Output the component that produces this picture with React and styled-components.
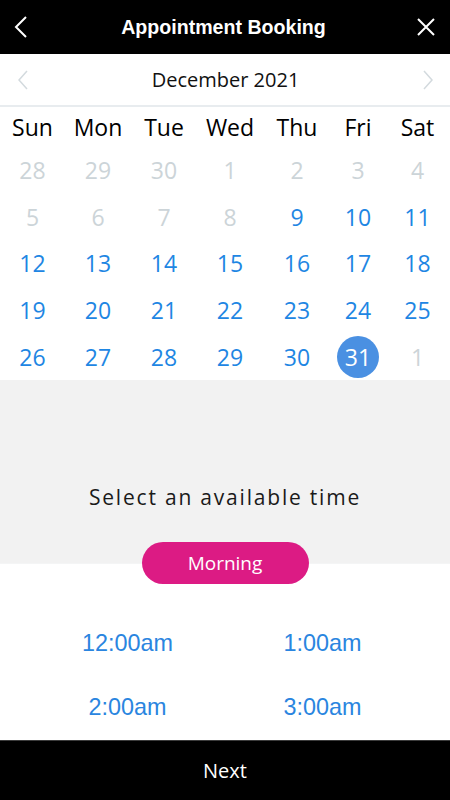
import React, { useState } from "react";
import styled, { createGlobalStyle } from "styled-components";

const GlobalStyle = createGlobalStyle`
  html, body {
    margin: 0;
    padding: 0;
    background: #ffffff;
  }
  * {
    box-sizing: border-box;
  }
`;

const weekdays = ["Sun", "Mon", "Tue", "Wed", "Thu", "Fri", "Sat"];

// previous/next month days are muted, days before the 9th are unavailable
const weeks = [
  [28, 29, 30, 1, 2, 3, 4],
  [5, 6, 7, 8, 9, 10, 11],
  [12, 13, 14, 15, 16, 17, 18],
  [19, 20, 21, 22, 23, 24, 25],
  [26, 27, 28, 29, 30, 31, 1],
];

const times = ["12:00am", "1:00am", "2:00am", "3:00am"];

export default function App() {
  const [selected, setSelected] = useState(31);

  return (
    <Page>
      <GlobalStyle />
      <Header>
        <IconButton aria-label="Back">
          <svg width="14" height="22" viewBox="0 0 14 22">
            <path d="M12 1 L2 11 L12 21" fill="none" stroke="#fff" strokeWidth="2" />
          </svg>
        </IconButton>
        <Title>Appointment Booking</Title>
        <IconButton aria-label="Close">
          <svg width="18" height="18" viewBox="0 0 18 18">
            <path d="M1 1 L17 17 M17 1 L1 17" fill="none" stroke="#fff" strokeWidth="2" />
          </svg>
        </IconButton>
      </Header>

      <MonthBar>
        <MonthArrow aria-label="Previous month">
          <svg width="10" height="20" viewBox="0 0 10 20">
            <path d="M9 1 L1 10 L9 19" fill="none" stroke="#d3dade" strokeWidth="1.5" />
          </svg>
        </MonthArrow>
        <MonthLabel>December 2021</MonthLabel>
        <MonthArrow aria-label="Next month">
          <svg width="10" height="20" viewBox="0 0 10 20">
            <path d="M1 1 L9 10 L1 19" fill="none" stroke="#d3dade" strokeWidth="1.5" />
          </svg>
        </MonthArrow>
      </MonthBar>

      <Calendar>
        <WeekRow>
          {weekdays.map((w) => (
            <Weekday key={w}>{w}</Weekday>
          ))}
        </WeekRow>
        {weeks.map((week, wi) => (
          <WeekRow key={wi} $tall>
            {week.map((d, di) => {
              const outside = (wi === 0 && d > 7) || (wi === 4 && d < 7);
              const muted = outside || (wi < 2 && d < 9);
              const isSel = !outside && d === selected;
              return (
                <DayCell key={di}>
                  <Day
                    $muted={muted}
                    $selected={isSel}
                    onClick={() => !muted && setSelected(d)}
                  >
                    {d}
                  </Day>
                </DayCell>
              );
            })}
          </WeekRow>
        ))}
      </Calendar>

      <Prompt>
        <PromptText>Select an available time</PromptText>
      </Prompt>
      <PillRow>
        <Pill>Morning</Pill>
      </PillRow>

      <Slots>
        {times.map((t) => (
          <Slot key={t}>{t}</Slot>
        ))}
      </Slots>

      <Footer>Next</Footer>
    </Page>
  );
}

const Page = styled.div`
  width: 450px;
  height: 800px;
  display: flex;
  flex-direction: column;
  background: #ffffff;
  font-family: "Open Sans", "Noto Sans", sans-serif;
  overflow: hidden;
`;

const Header = styled.header`
  height: 54px;
  flex-shrink: 0;
  background: #000000;
  display: flex;
  align-items: center;
  justify-content: space-between;
  padding: 0 14px 0 11px;
`;

const IconButton = styled.button`
  background: none;
  border: none;
  padding: 0;
  display: flex;
  align-items: center;
  justify-content: center;
  width: 20px;
  height: 24px;
  cursor: pointer;
`;

const Title = styled.h1`
  margin: 0;
  color: #ffffff;
  font-family: "Liberation Sans", Arial, sans-serif;
  font-weight: 700;
  font-size: 19.6px;
  letter-spacing: 0;
`;

const MonthBar = styled.div`
  height: 53px;
  flex-shrink: 0;
  display: flex;
  align-items: center;
  justify-content: space-between;
  padding: 0 17px 0 18px;
  border-bottom: 2px solid #e8ecef;
`;

const MonthArrow = styled.button`
  background: none;
  border: none;
  padding: 0;
  display: flex;
  cursor: pointer;
`;

const MonthLabel = styled.div`
  font-size: 20px;
  color: #111111;
`;

const Calendar = styled.div`
  flex-shrink: 0;
  display: flex;
  flex-direction: column;
`;

const WeekRow = styled.div`
  display: grid;
  grid-template-columns: 65px 66px 66px 66px 68px 54px 65px;
  height: ${(p) => (p.$tall ? "46.6px" : "40px")};
  align-items: center;
`;

const Weekday = styled.div`
  text-align: center;
  font-size: 23px;
  color: #000000;
`;

const DayCell = styled.div`
  display: flex;
  justify-content: center;
  align-items: center;
`;

const Day = styled.span`
  width: 42px;
  height: 42px;
  border-radius: 50%;
  display: flex;
  align-items: center;
  justify-content: center;
  font-size: 23px;
  color: ${(p) => (p.$selected ? "#ffffff" : p.$muted ? "#ccd4d8" : "#1e86e3")};
  background: ${(p) => (p.$selected ? "#4a90e2" : "transparent")};
  cursor: ${(p) => (p.$muted ? "default" : "pointer")};
`;

const Prompt = styled.div`
  height: 162px;
  flex-shrink: 0;
  background: #f2f2f2;
  display: flex;
  align-items: flex-end;
  justify-content: center;
  padding-bottom: 30px;
`;

const PromptText = styled.div`
  font-size: 21px;
  line-height: 30px;
  letter-spacing: 1.8px;
  color: #1a1a1a;
`;

const PillRow = styled.div`
  height: 42px;
  flex-shrink: 0;
  display: flex;
  justify-content: center;
  background: linear-gradient(#f2f2f2 0, #f2f2f2 21px, #e9ebec 21px, #ffffff 22px);
`;

const Pill = styled.button`
  width: 167px;
  height: 42px;
  border: none;
  border-radius: 21px;
  background: #dc1b84;
  color: #ffffff;
  font-family: "Open Sans", "Noto Sans", sans-serif;
  font-size: 19px;
  cursor: pointer;
`;

const Slots = styled.div`
  flex: 1;
  min-height: 0;
  display: grid;
  grid-template-columns: 1fr 1fr;
  grid-auto-rows: 64px;
  align-content: start;
  align-items: center;
  padding: 28px 30px 0;
  overflow: hidden;
`;

const Slot = styled.div`
  text-align: center;
  font-family: "Liberation Sans", Arial, sans-serif;
  font-size: 23.4px;
  color: #2a85e0;
  cursor: pointer;
`;

const Footer = styled.footer`
  height: 60px;
  flex-shrink: 0;
  background: #000000;
  border-top: 1px solid #3c3c3c;
  color: #ffffff;
  display: flex;
  align-items: center;
  justify-content: center;
  font-size: 20px;
`;
